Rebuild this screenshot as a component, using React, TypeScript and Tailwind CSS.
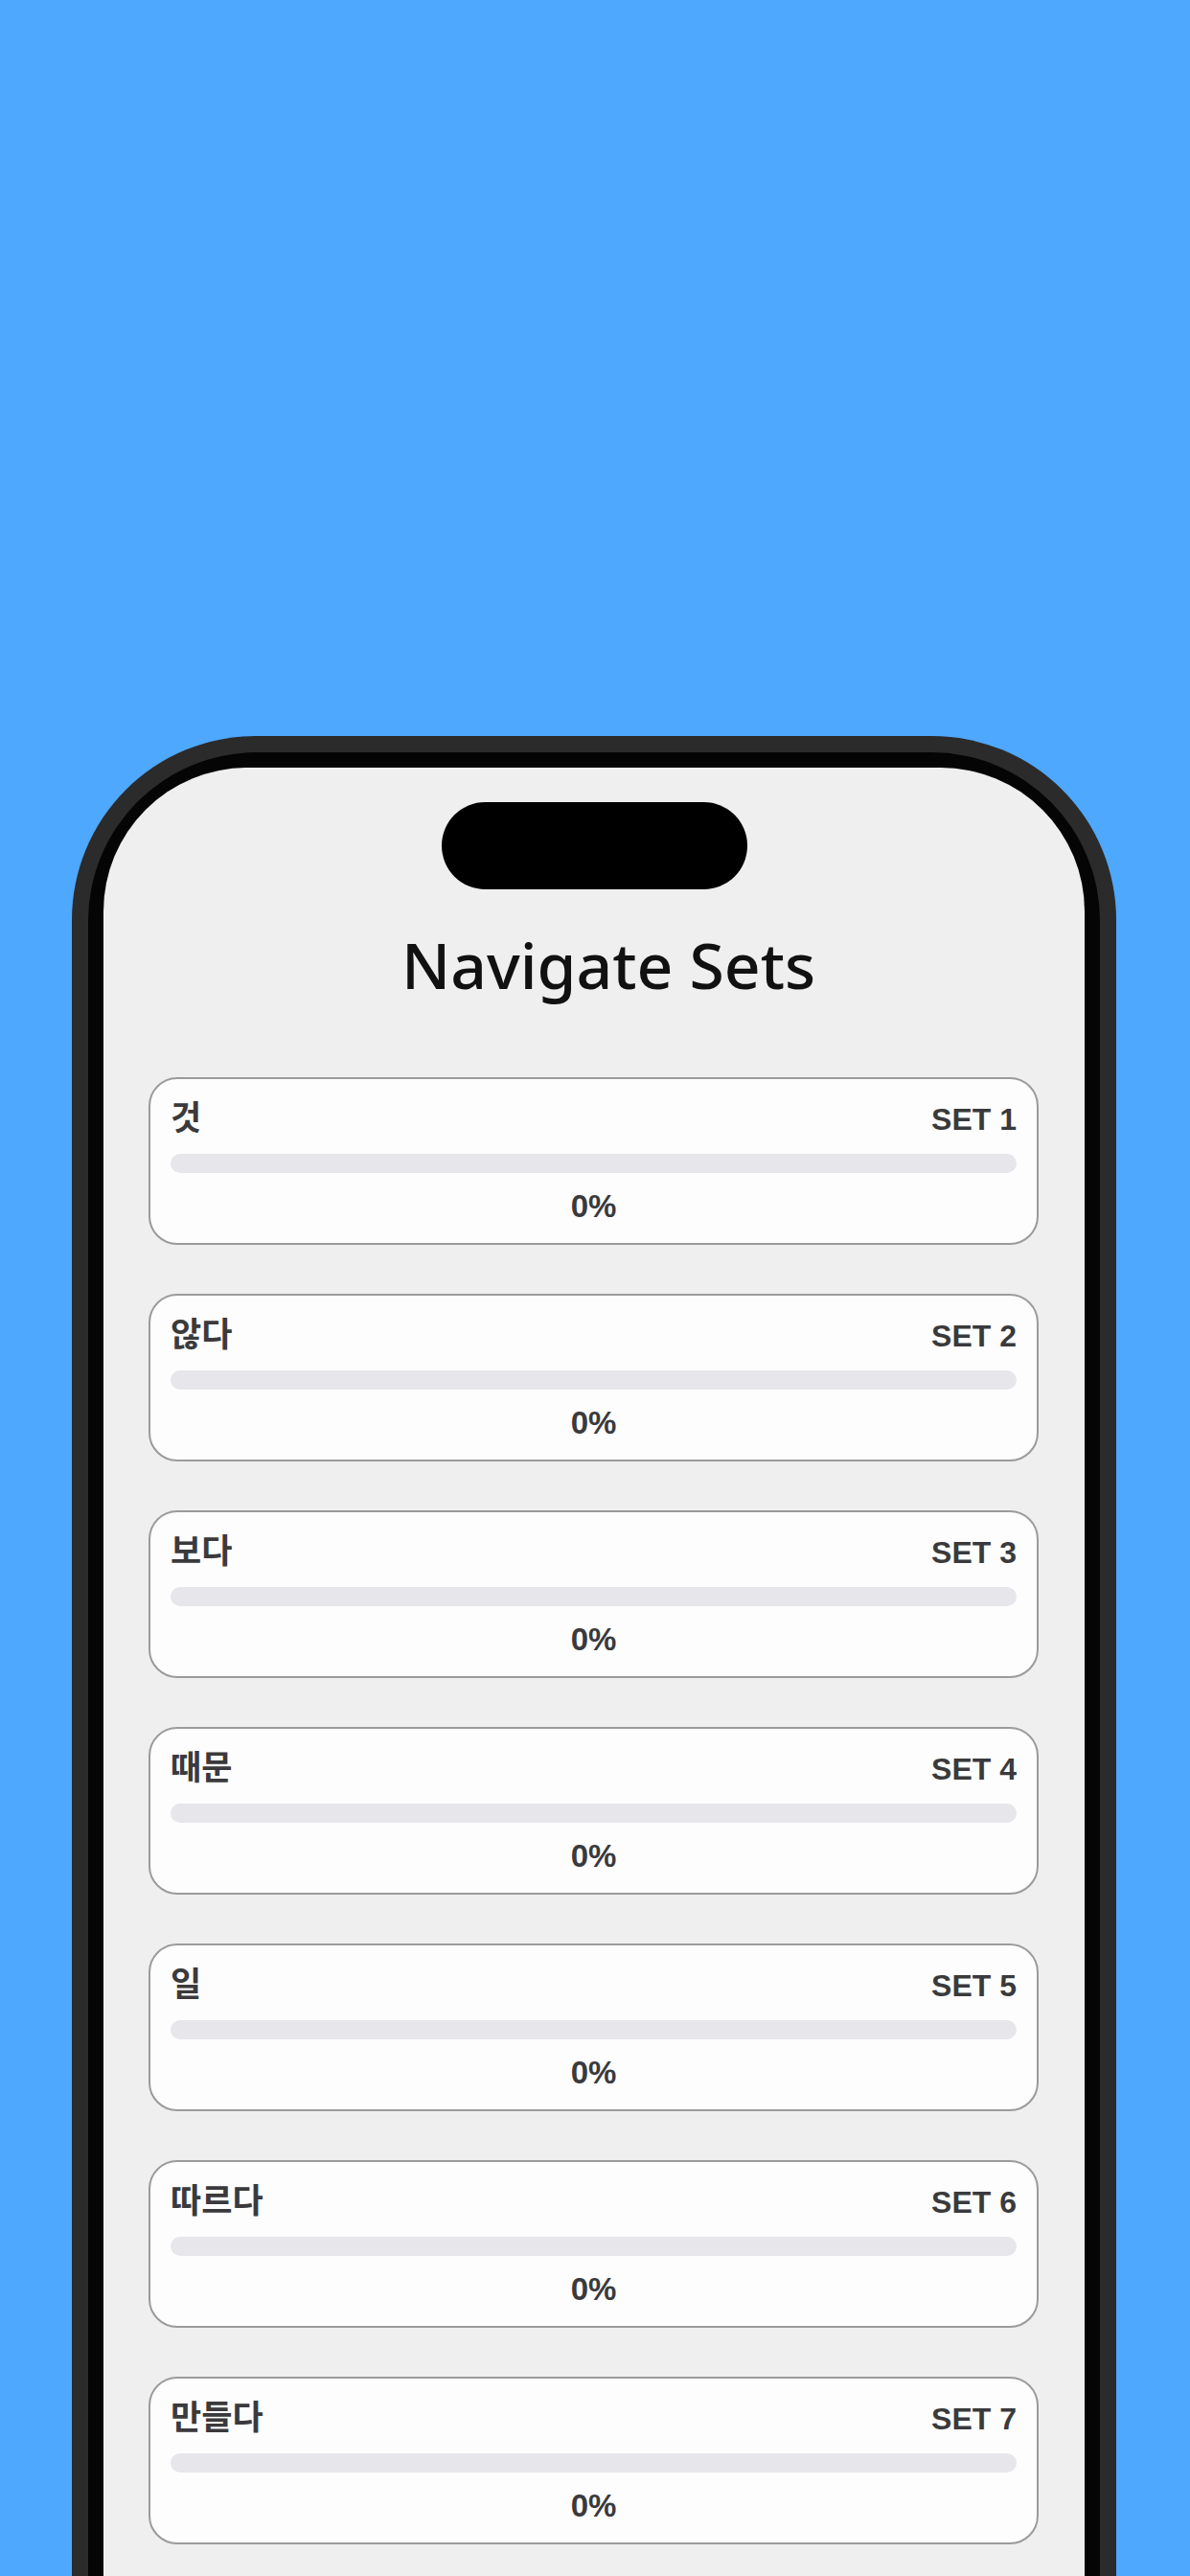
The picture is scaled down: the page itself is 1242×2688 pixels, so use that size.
import React from 'react';

const sets = [
  { word: '것', label: 'SET 1', progress: 0 },
  { word: '않다', label: 'SET 2', progress: 0 },
  { word: '보다', label: 'SET 3', progress: 0 },
  { word: '때문', label: 'SET 4', progress: 0 },
  { word: '일', label: 'SET 5', progress: 0 },
  { word: '따르다', label: 'SET 6', progress: 0 },
  { word: '만들다', label: 'SET 7', progress: 0 },
];

function SetCard({ word, label, progress }: { word: string; label: string; progress: number }) {
  return (
    <div className="h-[175px] shrink-0 rounded-[30px] border-2 border-[#9b9b9b] bg-[#fdfdfd] px-[21px] pt-[16px]">
      <div className="flex items-baseline justify-between">
        <span className="font-['Noto_Sans_CJK_KR',sans-serif] text-[35px] leading-[44px] font-semibold text-[#3a3a3c]">
          {word}
        </span>
        <span className="font-['Liberation_Sans',Arial,sans-serif] text-[32px] leading-[44px] font-bold text-[#3a3a3c]">
          {label}
        </span>
      </div>
      <div className="mt-[14px] h-[20px] w-full overflow-hidden rounded-full bg-[#e6e6eb]">
        <div className="h-full rounded-full bg-[#4ea8fd]" style={{ width: `${progress}%` }} />
      </div>
      <div className="mt-[15px] text-center font-['Liberation_Sans',Arial,sans-serif] text-[33px] leading-[40px] font-bold text-[#3a3a3c]">
        {progress}%
      </div>
    </div>
  );
}

export default function App() {
  return (
    <div className="h-[2688px] w-[1242px] overflow-hidden bg-[#4ea8fd] pl-[75px] pt-[768px]">
      {/* phone frame */}
      <div className="h-[2200px] w-[1090px] rounded-[192px] bg-[#2b2b2b] p-[17px]">
        <div className="h-full w-full rounded-[176px] bg-[#050505] p-[16px]">
          <div className="flex h-full w-full flex-col overflow-hidden rounded-[150px] bg-[#efefef]">
            {/* dynamic island */}
            <div className="mx-auto mt-[36px] h-[91px] w-[319px] shrink-0 rounded-full bg-black" />

            <h1 className="mt-[45px] pl-[30px] text-center font-['Noto_Sans',sans-serif] text-[66px] leading-[67px] font-medium text-[#111]">
              Navigate Sets
            </h1>

            <div className="mt-[84px] flex flex-col gap-[51px] pl-[47px] pr-[48px]">
              {sets.map((s) => (
                <SetCard key={s.label} word={s.word} label={s.label} progress={s.progress} />
              ))}
            </div>
          </div>
        </div>
      </div>
    </div>
  );
}
